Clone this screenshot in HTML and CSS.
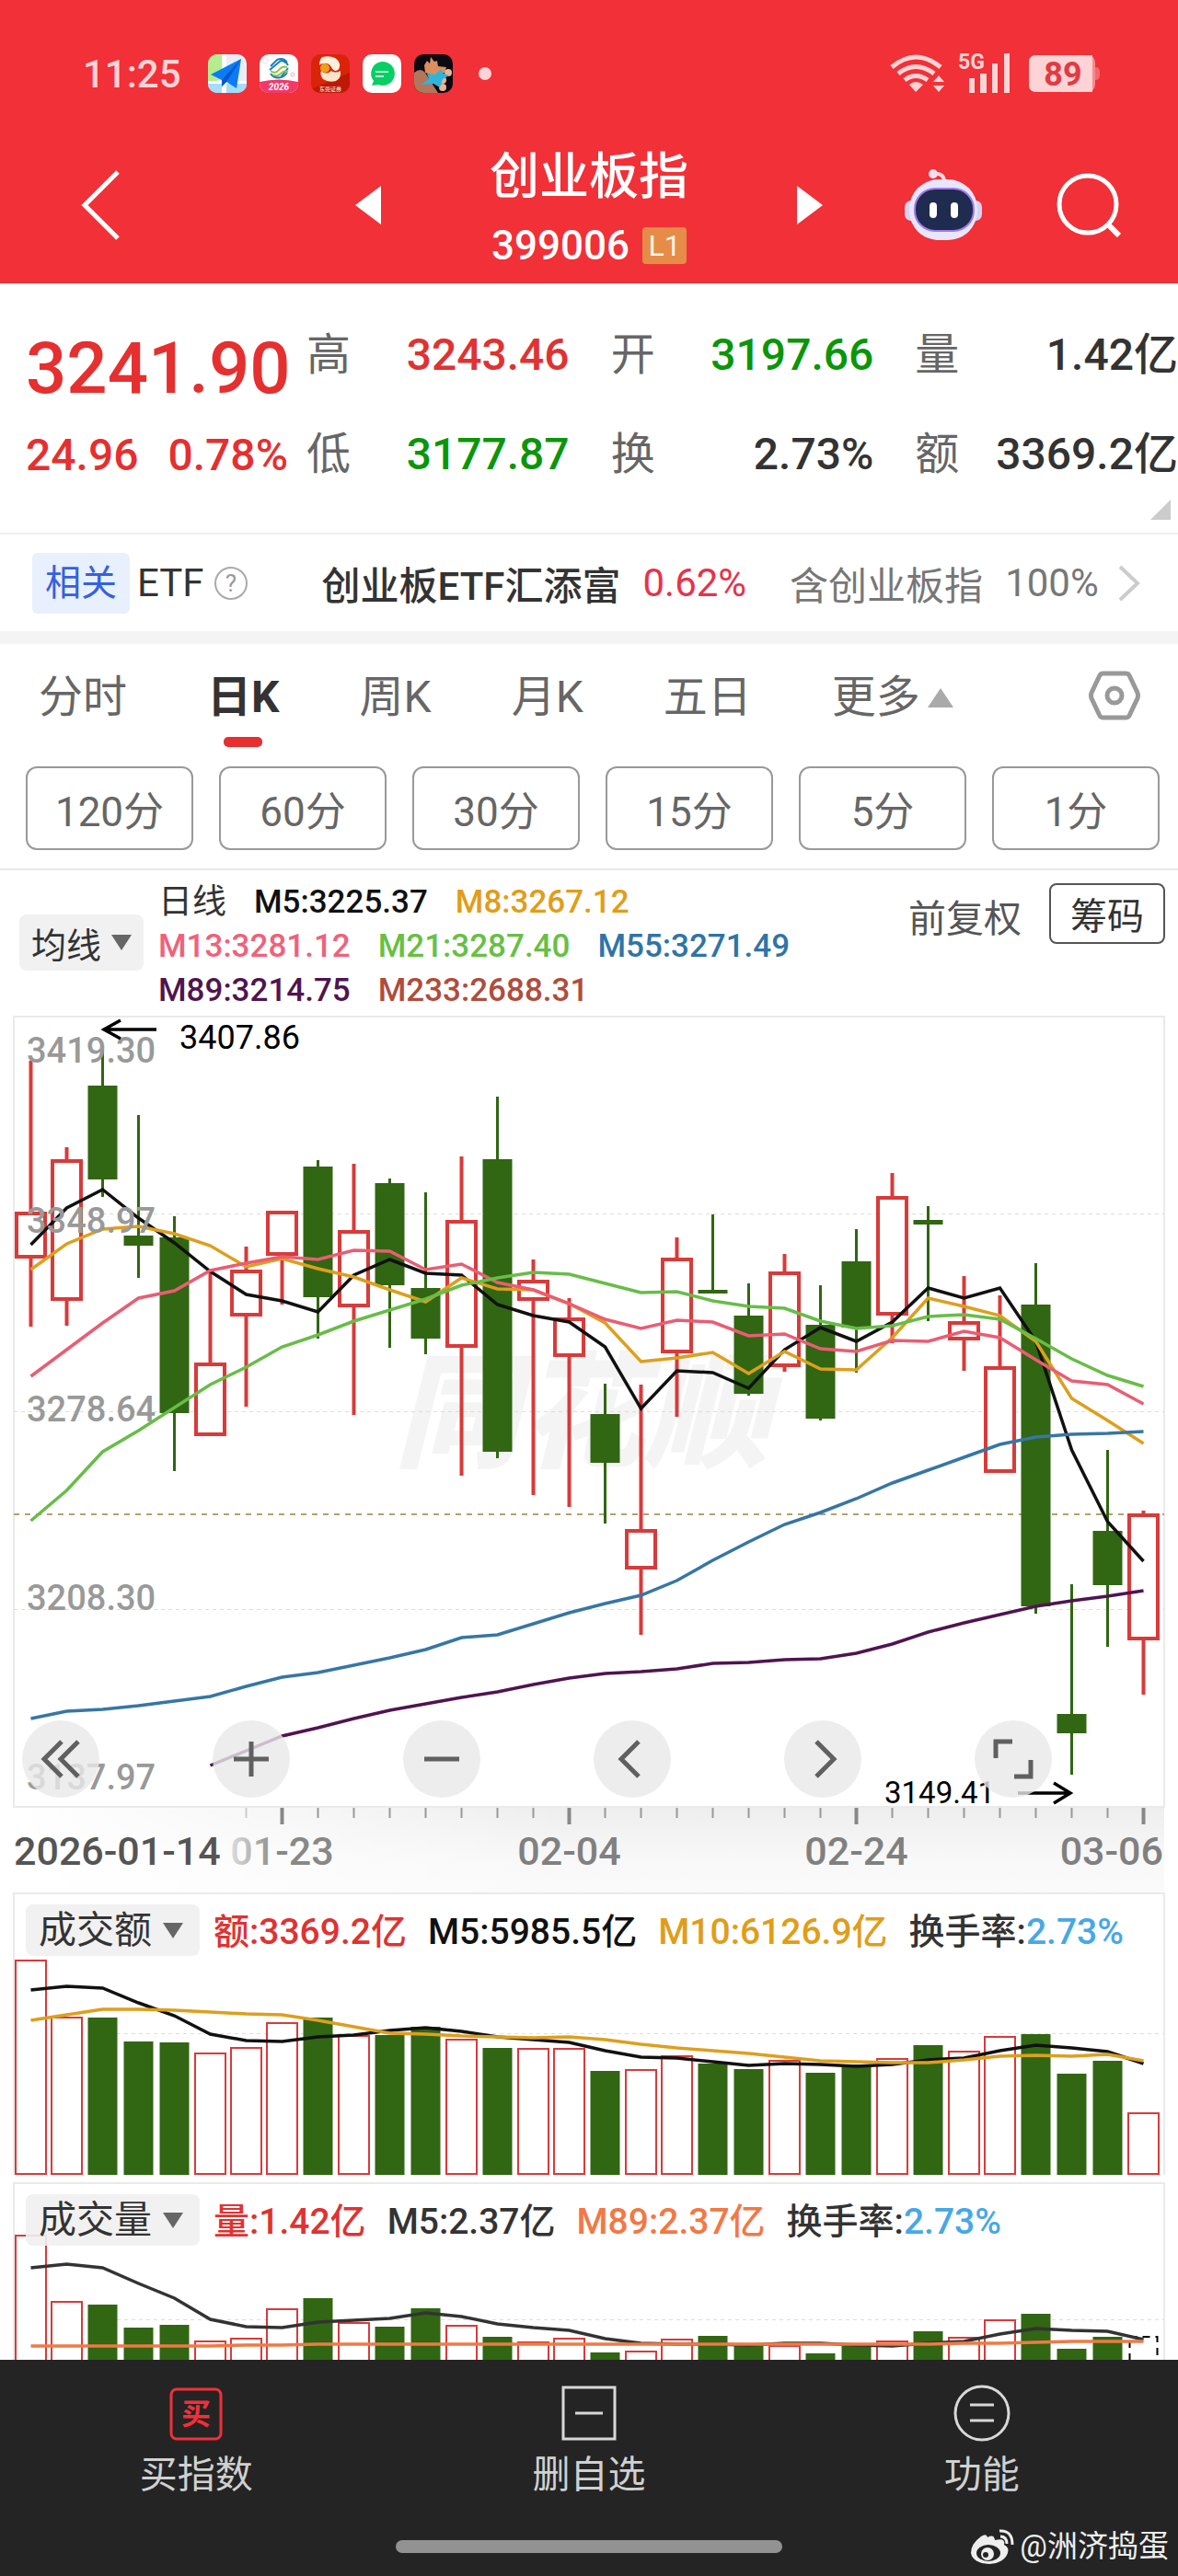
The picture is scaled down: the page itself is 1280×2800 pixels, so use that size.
FILE: index.html
```html
<!DOCTYPE html>
<html lang="zh-CN">
<head>
    <meta charset="utf-8">
    <meta name="viewport" content="width=device-width">
    <title>创业板指 399006</title>
    <link rel="stylesheet" href="styles.css">
</head>
<body>
    <header class="top">
        <div class="status">
            <span class="time">11:25</span>
            <div class="apps">
                <svg class="app" viewBox="0 0 42 42">
                    <rect width="42" height="42" fill="#e9eef6"/>
                    <path d="M0 0h15v27L0 32z" fill="#b4ec8e"/>
                    <path d="M0 31h42v11H0z" fill="#a4dcfa"/>
                    <path d="M15 0h5v42h-5zM0 29h42v3H0z" fill="#fff"/>
                    <path d="M36 5L3 22l12 6v7l5-5 11 7z" fill="#0a7cf8"/>
                    <path d="M36 5L15 28v7l5-5z" fill="#0a56c8"/>
                </svg>
                <svg class="app" viewBox="0 0 42 42">
                    <rect width="42" height="42" fill="#fff"/>
                    <g fill="none" stroke="#1b7fc0" stroke-width="2">
                        <path d="M12 13l7-7q7-3 11 3M11 17l12-10q5 0 8 5M12 21q4 6 11 4l8-10M17 25q8 2 13-5"/>
                    </g>
                    <path d="M12 18q5 4 9-1t9-3M14 22q5 3 9-1t8-2" fill="none" stroke="#8cc63e" stroke-width="2"/>
                    <path d="M0 30q21-5 42 0v12H0z" fill="#f2376c"/>
                    <text x="21" y="39" text-anchor="middle" font-size="10" font-weight="700" font-style="italic" fill="#fff">2026</text>
                    <circle cx="6" cy="7" r="3" fill="none" stroke="#f7a8b8" stroke-dasharray="1 1"/>
                    <circle cx="36" cy="22" r="2" fill="none" stroke="#f7a8b8"/>
                </svg>
                <svg class="app" viewBox="0 0 42 42">
                    <rect width="42" height="42" fill="#d92408"/>
                    <path d="M0 38L42 20v22H0z" fill="#bd1905"/>
                    <path d="M12 3q8-2 14 1 6 4 5 9 0 4-4 5-3 0-5-4-3-5-8-4-4 0-5 2 0-6 3-9z" fill="#fff0dc"/>
                    <circle cx="15" cy="15" r="5" fill="#eaa21c"/>
                    <path d="M22 18q4 3 10 0 1 8-5 11-8 2-14-2-4-5-2-9 5 5 11 0z" fill="#ffe4cb"/>
                    <text x="21" y="40" text-anchor="middle" font-size="6" fill="#fff">东莞证券</text>
                </svg>
                <svg class="app" viewBox="0 0 42 42">
                    <rect width="42" height="42" fill="#fff"/>
                    <path d="M21 8a13 13 0 1 1-4 25l-7 1 2-5A13 13 0 0 1 21 8z" fill="#07cf63"/>
                    <path d="M14 19h14M14 24h9" stroke="#fff" stroke-width="1.5"/>
                </svg>
                <svg class="app" viewBox="0 0 42 42">
                    <rect width="42" height="42" fill="#0c0a10"/>
                    <path d="M0 20q7-6 12 0l5 8 9 14H4l-4-6z" fill="#b4765a"/>
                    <path d="M11 12l3-5 3 3 1-7 4 5 3-1 1 6 9 1-2 6-12 3-9-3z" fill="#d98f5e"/>
                    <circle cx="37" cy="20" r="4" fill="#ecb394"/>
                    <circle cx="31" cy="28" r="4" fill="#ecb394"/>
                    <circle cx="31" cy="36" r="4" fill="#ecb394"/>
                    <path d="M14 21l9 1 6-6 3 5 6 2-7 4-3 9-7-4-14 1 9-6z" fill="#2fb4dc"/>
                </svg>
            </div>
            <i class="dot"></i>
            <svg class="signal" viewBox="0 -8 234 62" width="234" height="62">
                <g fill="none" stroke="#fdd3d5" stroke-width="5">
                    <path d="M3 16Q29-6 56 16M10 23q19-15 39 0M17 30q12-9 25 0"/>
                </g>
                <path d="M22 35q7-6 15 0l-8 8zM48 32l6-7 6 7zM48 36h12l-6 7z" fill="#fdd3d5"/>
                <text x="75" y="18" font-size="23" font-weight="700" fill="#fdd3d5">5G</text>
                <path d="M87 28h6v16h-6zM99 23h7v21h-7zM112 12h6v32h-6zM125 1h6v43h-6z" fill="#fdd3d5"/>
                <rect x="152" y="3" width="72" height="40" rx="8" fill="#f68a8e"/>
                <path d="M224 16q5 0 5 5v4q0 5-5 5z" fill="#f6666c"/>
                <path d="M160 3h61v40h-61q-8 0-8-8V11q0-8 8-8z" fill="#fdd3d5"/>
                <text x="189" y="36" text-anchor="middle" font-size="36" font-weight="700" fill="#e23a43">89</text>
            </svg>
        </div>
        <nav class="nav">
            <div class="nav-left">
                <button aria-label="返回"><svg viewBox="0 0 44 76" width="44" height="76"><path d="M40 2L4 38l36 36" fill="none" stroke="#fff" stroke-width="5"/></svg></button>
                <button aria-label="上一个"><svg viewBox="0 0 28 42" width="28" height="42"><path d="M28 0v42L0 21z" fill="#fff"/></svg></button>
            </div>
            <div class="title">
                <h1>创业板指</h1>
                <div class="code">399006<span class="level">L1</span></div>
            </div>
            <div class="nav-right">
                <button aria-label="下一个"><svg viewBox="0 0 28 42" width="28" height="42"><path d="M0 0v42l28-21z" fill="#fff"/></svg></button>
                <button aria-label="智能助手">
                    <svg viewBox="-8 0 92 78" width="92" height="78">
                        <rect x="0" y="34" width="14" height="22" rx="7" fill="#d5d3f3"/>
                        <rect x="70" y="34" width="14" height="22" rx="7" fill="#d5d3f3"/>
                        <path d="M30 5q13-2 13 9" fill="none" stroke="#fbd9df" stroke-width="4"/>
                        <circle cx="31" cy="5" r="5" fill="#f6dfe9"/>
                        <rect x="5" y="11" width="74" height="66" rx="32" fill="#e9e6fb"/>
                        <rect x="11" y="21" width="64" height="46" rx="22" fill="#202b50" stroke="#9b7cec" stroke-width="2"/>
                        <rect x="27" y="36" width="8" height="17" rx="4" fill="#fff"/>
                        <rect x="50" y="36" width="8" height="17" rx="4" fill="#fff"/>
                    </svg>
                </button>
                <button aria-label="搜索"><svg viewBox="0 0 70 70" width="70" height="70"><circle cx="34" cy="34" r="31" fill="none" stroke="#fff" stroke-width="5"/><path d="M55 55l13 13" stroke="#fff" stroke-width="6"/></svg></button>
            </div>
        </nav>
    </header>

    <section class="quote">
        <div class="price">
            <strong>3241.90</strong>
            <div class="change"><span>24.96</span><span>0.78%</span></div>
        </div>
        <dl class="stats">
            <div><dt>高</dt><dd class="up">3243.46</dd></div>
            <div><dt>开</dt><dd class="down">3197.66</dd></div>
            <div><dt>量</dt><dd>1.42亿</dd></div>
            <div><dt>低</dt><dd class="down">3177.87</dd></div>
            <div><dt>换</dt><dd>2.73%</dd></div>
            <div><dt>额</dt><dd>3369.2亿</dd></div>
        </dl>
        <i class="expand"></i>
    </section>

    <a class="etf" href="#etf">
        <span class="tag">相关</span>
        <span class="etf-word">ETF</span>
        <svg class="help" viewBox="0 0 38 38" width="38" height="38"><circle cx="19" cy="19" r="17" fill="none" stroke="#aaa" stroke-width="2"/><text x="19" y="28" text-anchor="middle" font-size="26" fill="#999">?</text></svg>
        <b>创业板ETF汇添富</b>
        <span class="etf-rate">0.62%</span>
        <span class="etf-note">含创业板指</span>
        <span class="etf-share">100%</span>
        <svg viewBox="0 0 26 40" width="26" height="40"><path d="M3 2l19 18L3 38" fill="none" stroke="#ccc" stroke-width="4"/></svg>
    </a>

    <nav class="tabs">
        <a href="#time">分时</a>
        <a href="#day" class="on">日K</a>
        <a href="#week">周K</a>
        <a href="#month">月K</a>
        <a href="#five">五日</a>
        <a href="#more" class="more">更多</a>
        <button class="gear" aria-label="设置"><svg viewBox="0 0 56 54" width="56" height="54"><path d="M16 3h24q3 0 4 2l9 19q1 3 0 6l-9 19q-1 2-4 2H16q-3 0-4-2L3 30q-1-3 0-6l9-19q1-2 4-2z" fill="none" stroke="#999" stroke-width="5"/><circle cx="28" cy="27" r="8" fill="none" stroke="#999" stroke-width="5"/></svg></button>
    </nav>
    <div class="minutes">
        <button>120分</button>
        <button>60分</button>
        <button>30分</button>
        <button>15分</button>
        <button>5分</button>
        <button>1分</button>
    </div>

    <div class="legend">
        <button class="pick">均线</button>
        <div class="averages">
            <div><span class="c-text">日线</span><span class="c-m5">M5:3225.37</span><span class="c-m8">M8:3267.12</span></div>
            <div><span class="c-m13">M13:3281.12</span><span class="c-m21">M21:3287.40</span><span class="c-m55">M55:3271.49</span></div>
            <div><span class="c-m89">M89:3214.75</span><span class="c-m233">M233:2688.31</span></div>
        </div>
        <a class="adjust" href="#adjust">前复权</a>
        <button class="chips">筹码</button>
    </div>

    <section class="kline">
        <svg id="kline" viewBox="0 0 1280 957"></svg>
        <div class="tools">
            <button aria-label="最左"><svg viewBox="0 0 44 44"><path d="M23 3L4 22l19 19M41 3L22 22l19 19"/></svg></button>
            <button aria-label="放大"><svg viewBox="0 0 44 44"><path d="M3 22h38M22 3v38"/></svg></button>
            <button aria-label="缩小"><svg viewBox="0 0 44 44"><path d="M3 22h38"/></svg></button>
            <button aria-label="左移"><svg viewBox="0 0 44 44"><path d="M29 3L10 22l19 19"/></svg></button>
            <button aria-label="右移"><svg viewBox="0 0 44 44"><path d="M15 3l19 19-19 19"/></svg></button>
            <button aria-label="全屏"><svg viewBox="0 0 44 44"><path d="M21 3H3v18M41 23v18H23"/></svg></button>
        </div>
    </section>

    <section class="panel">
        <div class="panel-head">
            <button class="pick wide">成交额</button>
            <span class="up">额:3369.2亿</span><span class="c-m5">M5:5985.5亿</span><span class="c-m8">M10:6126.9亿</span><span>换手率:<em>2.73%</em></span>
        </div>
        <svg id="amount" viewBox="0 0 1280 315"></svg>
    </section>
    <section class="panel">
        <div class="panel-head">
            <button class="pick wide">成交量</button>
            <span class="up">量:1.42亿</span><span>M5:2.37亿</span><span class="c-vol">M89:2.37亿</span><span>换手率:<em>2.73%</em></span>
        </div>
        <svg id="volume" viewBox="0 0 1280 193"></svg>
    </section>

    <footer class="bottom">
        <nav>
            <a href="#buy">
                <svg viewBox="0 0 62 62"><rect x="4" y="5" width="54" height="54" rx="6" fill="none" stroke="#f2303a" stroke-width="3"/><text x="31" y="43" text-anchor="middle" font-size="32" font-weight="700" fill="#f2303a">买</text></svg>
                买指数
            </a>
            <a href="#remove">
                <svg viewBox="0 0 62 62"><path d="M3 3h56v56H3zM16 31h30" fill="none" stroke="#d8d8d8" stroke-width="3"/></svg>
                删自选
            </a>
            <a href="#tools">
                <svg viewBox="0 0 62 62"><circle cx="31" cy="31" r="29" fill="none" stroke="#d8d8d8" stroke-width="3"/><path d="M18 22h26M18 39h26" stroke="#d8d8d8" stroke-width="3"/></svg>
                功能
            </a>
        </nav>
        <i class="home"></i>
        <div class="author">
            <svg viewBox="0 0 48 40" width="48" height="40">
                <path d="M19 10q7-4 8 3 12-3 10 5 6 3 4 9-4 11-20 12Q3 38 1 27 1 17 12 9q6-4 7 1z" fill="#eee"/>
                <ellipse cx="20" cy="27" rx="13" ry="9" fill="#242424"/>
                <circle cx="19" cy="28" r="7" fill="#eee"/>
                <circle cx="17" cy="29" r="3" fill="#242424"/>
                <path d="M33 9q7 0 7 8M32 3q14-1 14 15" fill="none" stroke="#eee" stroke-width="3"/>
            </svg>
            @洲济捣蛋
        </div>
    </footer>
    <script src="chart.js"></script>
</body>
</html>
```
FILE: styles.css
```css
* {box-sizing: border-box}
body {
    margin: 0;
    background: #fff;
    color: #333;
    font-family: Roboto, "Noto Sans CJK SC", sans-serif;
}
a {color: inherit; text-decoration: none}
svg {display: block}
button {
    margin: 0;
    padding: 0;
    border: 0;
    background: none;
    color: inherit;
    font: inherit;
}
h1, dl, dd {margin: 0}
.up {color: #e03232}
.down {color: #0a960a}

/* header */
.top {
    height: 308px;
    background: #f13037;
    color: #fff;
}
.status {
    display: flex;
    align-items: center;
    height: 160px;
    padding: 0 80px 0 90px;
}
.time {
    width: 136px;
    color: #fdd3d5;
    font-size: 42px;
    font-weight: 500;
}
.apps {display: flex; gap: 14px}
.app {width: 42px; height: 42px; border-radius: 10px}
.dot {
    width: 14px;
    height: 14px;
    margin-left: 28px;
    border-radius: 50%;
    background: #fdd3d5;
}
.signal {margin-left: auto}
.nav {
    display: grid;
    grid-template-columns: 1fr auto 1fr;
    height: 148px;
}
.nav-left, .nav-right {
    display: flex;
    justify-content: space-between;
    align-items: center;
    height: 126px;
}
.nav-left {padding-left: 88px}
.nav-right {padding-right: 62px}
.title {padding: 2px 118px 0; text-align: center}
.title h1 {
    font-size: 54px;
    font-weight: 500;
    line-height: 62px;
}
.code {
    display: flex;
    justify-content: center;
    align-items: center;
    gap: 14px;
    height: 54px;
    margin-top: 16px;
    font-size: 44px;
    font-weight: 500;
}
.level {
    width: 48px;
    border-radius: 4px;
    background: #e58d48;
    color: #fff3e4;
    font-size: 32px;
    font-weight: 400;
    line-height: 40px;
}

/* quote */
.quote {
    position: relative;
    display: flex;
    height: 273px;
    padding: 39px 0 0 28px;
    border-bottom: 2px solid #eee;
    font-weight: 500;
}
.price {width: 305px; color: #e62f2f}
.price strong {
    display: block;
    font-size: 78px;
    font-weight: 500;
    line-height: 108px;
}
.change {
    display: flex;
    justify-content: space-between;
    padding-right: 20px;
    font-size: 48px;
    line-height: 80px;
}
.stats {
    flex: 1;
    display: grid;
    grid-template-columns: repeat(3, 1fr);
    grid-auto-rows: 108px;
    column-gap: 45px;
    font-size: 48px;
    line-height: 78px;
}
.stats div {display: flex; justify-content: space-between}
.stats dt {color: #666; font-weight: 400}
.expand {
    position: absolute;
    right: 8px;
    bottom: 14px;
    border: 11px solid;
    border-color: transparent #ccc #ccc transparent;
}

.etf {
    display: flex;
    align-items: center;
    height: 119px;
    padding: 0 40px 0 35px;
    border-bottom: 14px solid #f4f4f4;
    font-size: 42px;
}
.etf b {margin: 0 24px 0 80px; font-weight: 500}
.tag {
    margin-right: 8px;
    padding: 0 14px;
    border-radius: 6px;
    background: #e8effd;
    color: #3462dd;
    font-size: 39px;
    line-height: 66px;
}
.etf-rate {color: #e8324a}
.etf-note {margin: 0 24px 0 47px; color: #777}
.etf-share {margin-right: auto; color: #777}
.help {margin-left: 10px}

/* period tabs */
.tabs {
    display: flex;
    gap: 87px;
    height: 133px;
    padding: 0 41px 0 42px;
    color: #666;
    font-size: 48px;
    line-height: 116px;
}
.tabs .on {
    position: relative;
    color: #333;
    font-weight: 700;
}
.on::after {
    content: "";
    position: absolute;
    left: 18px;
    top: 101px;
    width: 42px;
    height: 11px;
    border-radius: 5px;
    background: #e62f2f;
}
.more {display: flex; align-items: center; gap: 8px; height: 116px}
.more::after {
    content: "";
    border: 14px solid transparent;
    border-top: 0;
    border-bottom: 21px solid #aaa;
}
.gear {height: 112px; margin-left: auto}
.minutes {
    display: grid;
    grid-template-columns: repeat(6, 1fr);
    gap: 28px;
    padding: 0 20px 20px 28px;
    border-bottom: 2px solid #e8e8e8;
}
.minutes button {
    height: 91px;
    border: 2px solid #999;
    border-radius: 12px;
    color: #666;
    font-size: 44px;
}

/* moving averages */
.legend {
    display: flex;
    align-items: flex-start;
    height: 154px;
    padding: 11px 14px 0 21px;
}
.pick {
    display: flex;
    align-items: center;
    justify-content: space-between;
    width: 135px;
    height: 61px;
    margin-top: 37px;
    padding: 0 13px;
    border-radius: 8px;
    background: rgba(240, 240, 240, .9);
    color: #333;
    font-size: 38px;
}
.pick::after {
    content: "";
    border: 11px solid transparent;
    border-bottom: 0;
    border-top: 17px solid #666;
}
.averages {
    padding-left: 16px;
    font-size: 35px;
    font-weight: 500;
    line-height: 48px;
}
.averages div {display: flex; gap: 30px}
.c-text {color: #333; font-weight: 400; font-size: 37px}
.c-m5 {color: #111}
.c-m8 {color: #e19d18}
.c-m13 {color: #f0617a}
.c-m21 {color: #67c043}
.c-m55 {color: #2f74a6}
.c-m89 {color: #501450}
.c-m233 {color: #b04c3c}
.c-vol {color: #f37843}
.adjust {
    margin-left: auto;
    color: #555;
    font-size: 41px;
    line-height: 84px;
}
.chips {
    width: 126px;
    height: 66px;
    margin: 3px 0 0 30px;
    border: 2px solid #555;
    border-radius: 8px;
    font-size: 40px;
}

/* charts */
.kline, .panel {position: relative}
.kline > svg, .panel > svg {width: 100%; height: auto}
.tools {
    position: absolute;
    left: 24px;
    right: 137px;
    bottom: 103px;
    display: flex;
    justify-content: space-between;
}
.tools button {
    width: 84px;
    height: 84px;
    border-radius: 50%;
    background: rgba(232, 232, 232, .8);
}
.tools svg {
    width: 44px;
    margin: 0 auto;
    fill: none;
    stroke: #606060;
    stroke-width: 5px;
}
.panel-head {
    position: absolute;
    top: 13px;
    left: 28px;
    display: flex;
    gap: 23px;
    font-size: 39px;
    font-weight: 500;
    line-height: 60px;
    white-space: nowrap;
}
.panel-head em {color: #46a8e6; font-style: normal}
.pick.wide {
    width: 189px;
    height: 56px;
    margin: 0 -8px 0 0;
    padding: 0 18px 0 14px;
    font-size: 41px;
    font-weight: 400;
}

/* bottom bar */
.bottom {
    position: relative;
    height: 235px;
    background: #242424;
    color: #d0d0d0;
}
.bottom nav {
    display: grid;
    grid-template-columns: repeat(3, 1fr);
    padding-top: 27px;
    font-size: 41px;
    line-height: 72px;
    text-align: center;
}
.bottom nav svg {width: 62px; margin: 0 auto}
.home {
    display: block;
    width: 420px;
    height: 14px;
    margin: 35px auto 0;
    border-radius: 7px;
    background: #929292;
}
.author {
    position: absolute;
    right: 10px;
    bottom: 8px;
    display: flex;
    align-items: center;
    gap: 6px;
    color: #eee;
    font-size: 33px;
    line-height: 48px;
}
```
FILE: chart.js
```js
var STEP = 39, FIRST = 33.5;
var RED = '#d93a3a', GREEN = '#316612';

// high, body top, body bottom, low, up or down
var candles = [
    [53,217,268,342,1], [147,160,314,341,1], [40,80,182,201,0], [112,243,254,289,0],
    [222,245,436,499,0], [281,381,461,461,1], [255,280,331,429,1], [216,216,265,318,1],
    [161,168,310,355,0], [165,237,321,438,1], [181,186,297,365,0], [196,300,355,372,0],
    [157,226,365,504,1], [92,160,478,485,0], [269,291,314,525,1], [311,332,375,538,1],
    [404,437,490,556,0], [405,562,606,677,1], [245,267,371,440,1], [220,302,306,306,0],
    [295,330,415,417,0], [263,282,386,391,1], [297,340,442,444,0], [236,271,343,392,0],
    [175,200,330,360,1], [211,226,231,336,0], [287,336,357,390,1], [308,385,501,501,1],
    [273,318,646,654,0], [622,763,784,829,0], [476,564,623,690,0], [542,545,683,742,1]
];
var m5 = [253,213,193,224,251,282,307,314,326,286,269,284,286,318,330,337,364,431,390,392,409,367,343,358,337,300,311,300,358,476,554,597];
var m8 = [280,252,236,233,241,254,277,268,279,288,302,315,289,301,302,317,338,380,376,370,393,369,388,389,354,311,320,330,358,420,444,469];
var m13 = [396,367,338,311,303,281,273,266,269,259,260,280,274,294,302,317,334,344,335,337,352,350,366,369,357,358,347,354,378,401,405,426];
var m21 = [553,520,478,455,430,405,386,364,351,336,324,312,297,289,283,285,295,305,304,314,320,322,336,344,341,331,329,334,355,377,395,407];
var m55 = [768,760,758,754,749,744,733,723,718,710,702,693,680,677,665,653,643,634,618,596,576,557,544,529,512,498,484,470,462,459,458,456];
var m89 = [819,803,787,778,768,759,752,745,739,731,724,719,717,714,708,707,704,703,697,687,674,664,655,646,640,635,629];

var amount = [73,135,136,162,163,174,168,141,136,155,155,146,159,169,169,169,194,192,177,186,192,182,196,187,180,166,172,156,154,197,183,239];
var amount5 = [106,102,104,120,134,154,161,162,157,155,150,147,151,157,160,163,172,179,180,184,188,186,187,189,187,182,180,172,166,169,173,186];
var amount10 = [139,133,127,127,128,130,132,133,139,146,153,154,156,157,158,157,160,165,169,172,175,179,183,184,185,185,182,178,177,178,176,183];

var volume = [57,129,133,158,155,172,169,137,126,152,157,137,155,168,173,169,185,183,170,167,178,177,186,178,172,162,168,149,143,181,168,168];
var volume5 = [93,89,93,110,126,149,157,158,152,150,148,142,146,154,158,161,170,175,176,176,177,175,175,177,178,175,173,165,159,161,162,171];
var volume89 = [178,178,178,178,178,178,177,177,176,176,176,176,176,176,176,176,176,176,176,176,176,176,176,176,176,176,175,175,174,173,173,173];

function px(i) { return FIRST + STEP * i; }

function line(ys, color, start) {
    var pts = ys.map(function (y, i) { return px(i + (start || 0)) + ',' + y; });
    return '<polyline points="' + pts.join(' ') + '" fill="none" stroke="' + color + '" stroke-width="3.5"/>';
}

function box(i, top, bottom, up, w) {
    if (up)
        return '<rect x="' + (px(i) - 17.5 + w / 2) + '" y="' + (top + w / 2) + '" width="' + (35 - w) + '" height="' + (bottom - top - w) +
            '" fill="#fff" stroke="' + RED + '" stroke-width="' + w + '"/>';
    return '<rect x="' + (px(i) - 16) + '" y="' + top + '" width="32" height="' + (bottom - top) + '" fill="' + GREEN + '"/>';
}

function grid(y, color, dash) {
    return '<path d="M15 ' + y + 'H1265" stroke="' + (color || '#ddd') + '" stroke-width="' + (color ? 2 : 1) + '" stroke-dasharray="' + (dash || '4 4') + '"/>';
}

function text(x, y, s, size, color, more) {
    return '<text x="' + x + '" y="' + y + '" font-size="' + size + '" fill="' + color + '" ' + (more || '') + '>' + s + '</text>';
}

function drawKline() {
    var s = '<defs><linearGradient id="shade" x2="0" y2="1"><stop offset="0" stop-color="#eee"/><stop offset=".6" stop-color="#f8f8f8"/><stop offset="1" stop-color="#fafafa"/></linearGradient>' +
        '<linearGradient id="veil"><stop offset="0" stop-color="#fff"/><stop offset="1" stop-color="#fff" stop-opacity="0"/></linearGradient>' +
        '<linearGradient id="fade"><stop offset="0" stop-color="#ddd"/><stop offset=".45" stop-color="#888"/></linearGradient></defs>';
    s += '<rect x="15" y="865" width="1250" height="92" fill="url(#shade)"/><rect x="15" y="865" width="600" height="92" fill="url(#veil)"/>';
    s += '<rect x="15" y="5" width="1250" height="859" fill="none" stroke="#eaeaea" stroke-width="2"/>';
    s += text(428, 484, '同花顺', 136, '#f4f4f4', 'font-weight="900" font-style="italic"');
    s += grid(219.5) + grid(434.5) + grid(649.5) + grid(546, '#b3a06e', '6 6');
    candles.forEach(function (c, i) {
        s += '<path d="M' + px(i) + ' ' + c[0] + 'V' + c[3] + '" stroke="' + (c[4] ? RED : GREEN) + '" stroke-width="' + (c[4] ? 4 : 3) + '"/>';
        s += box(i, c[1], c[2], c[4], 4);
    });
    s += line(m5, '#111') + line(m8, '#dd9f1d') + line(m13, '#ea5d73') + line(m21, '#67bd48') + line(m55, '#3676a6') + line(m89, '#501450', 5);
    ['3419.30', '3348.97', '3278.64', '3208.30', '3137.97'].forEach(function (t, i) {
        s += text(29, [55, 240, 445, 650, 845][i], t, 38, '#999', 'font-weight="500"');
    });
    s += text(195, 40, '3407.86', 36, '#000') + text(961, 860, '3149.41', 33, '#000');
    s += '<path d="M170 19H113M131 9L113 19l18 10M1106 849h57M1145 838l18 11-18 11" fill="none" stroke="#000" stroke-width="3.5"/>';
    for (var i = 6; i < 32; i++) {
        var major = i % 8 == 7;
        s += '<path d="M' + px(i) + ' 865V' + (major ? 883 : 876) + '" stroke="' + (major ? '#888' : i == 6 ? '#ccc' : '#999') + '" stroke-width="' + (major ? 4 : 2) + '"/>';
    }
    s += text(15, 927, '2026-01-14', 43, '#555', 'font-weight="500"');
    s += text(px(7), 927, '01-23', 43, 'url(#fade)', 'text-anchor="middle" font-weight="500"');
    s += text(px(15), 927, '02-04', 43, '#808080', 'text-anchor="middle" font-weight="500"');
    s += text(px(23), 927, '02-24', 43, '#808080', 'text-anchor="middle" font-weight="500"');
    s += text(1264, 927, '03-06', 43, '#808080', 'text-anchor="end" font-weight="500"');
    document.getElementById('kline').innerHTML = s;
}

function drawBars(id, tops, base, dashY, lines) {
    var s = '<path d="M15 ' + base + 'V1H1265V' + base + '" fill="none" stroke="#eaeaea" stroke-width="2"/>' + grid(dashY);
    tops.forEach(function (y, i) {
        // today's volume is still an estimate
        if (id == 'volume' && i == 31)
            s += '<rect x="' + (px(i) - 15) + '" y="' + y + '" width="30" height="200" fill="#fff" stroke="#000" stroke-width="2" stroke-dasharray="8 6"/>';
        else
            s += box(i, y, base, candles[i][4], 2);
    });
    document.getElementById(id).innerHTML = s + lines;
}

drawKline();
drawBars('amount', amount, 307, 153.5, line(amount5, '#111') + line(amount10, '#dd9f1d'));
drawBars('volume', volume, 300, 149.5, line(volume5, '#333') + line(volume89, '#ee7a45'));
```
